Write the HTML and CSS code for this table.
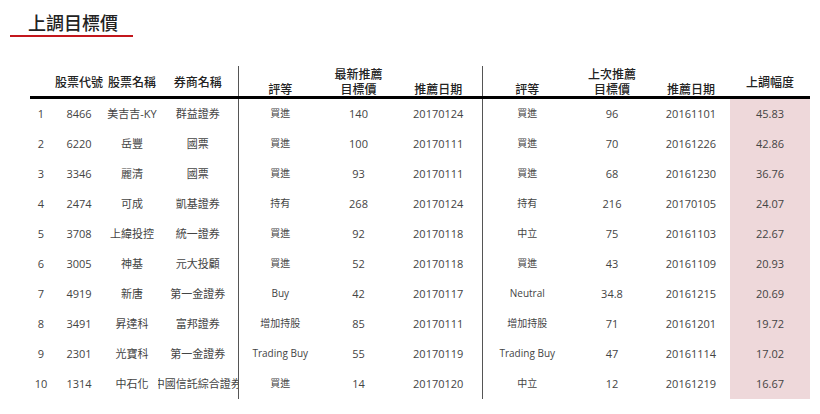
FILE: index.html
```html
<!DOCTYPE html>
<html lang="zh-Hant">
<head>
<meta charset="utf-8">
<title>上調目標價</title>
<link rel="stylesheet" href="styles.css">
</head>
<body>
<div class="page">
  <div class="title"><h1>上調目標價</h1></div>
  <table class="grid">
    <colgroup>
      <col class="w-idx"><col class="w-code"><col class="w-name"><col class="w-broker">
      <col class="w-rate"><col class="w-tgt"><col class="w-date">
      <col class="w-rate2"><col class="w-tgt2"><col class="w-date2"><col class="w-pct">
    </colgroup>
    <thead>
      <tr>
        <th class="mid"></th>
        <th class="mid">股票代號</th>
        <th class="mid">股票名稱</th>
        <th class="mid">券商名稱</th>
        <th class="bot sep">評等</th>
        <th class="bot"><span class="ln">最新推薦</span><span class="ln">目標價</span></th>
        <th class="bot">推薦日期</th>
        <th class="bot sep">評等</th>
        <th class="bot"><span class="ln">上次推薦</span><span class="ln">目標價</span></th>
        <th class="bot">推薦日期</th>
        <th class="mid">上調幅度</th>
      </tr>
    </thead>
    <tbody>
      <tr><td>1</td><td>8466</td><td>美吉吉-KY</td><td><div class="clip"><span>群益證券</span></div></td><td class="sep rate">買進</td><td>140</td><td>20170124</td><td class="sep rate">買進</td><td>96</td><td>20161101</td><td class="pct">45.83</td></tr>
      <tr><td>2</td><td>6220</td><td>岳豐</td><td><div class="clip"><span>國票</span></div></td><td class="sep rate">買進</td><td>100</td><td>20170111</td><td class="sep rate">買進</td><td>70</td><td>20161226</td><td class="pct">42.86</td></tr>
      <tr><td>3</td><td>3346</td><td>麗清</td><td><div class="clip"><span>國票</span></div></td><td class="sep rate">買進</td><td>93</td><td>20170111</td><td class="sep rate">買進</td><td>68</td><td>20161230</td><td class="pct">36.76</td></tr>
      <tr><td>4</td><td>2474</td><td>可成</td><td><div class="clip"><span>凱基證券</span></div></td><td class="sep rate">持有</td><td>268</td><td>20170124</td><td class="sep rate">持有</td><td>216</td><td>20170105</td><td class="pct">24.07</td></tr>
      <tr><td>5</td><td>3708</td><td>上緯投控</td><td><div class="clip"><span>統一證券</span></div></td><td class="sep rate">買進</td><td>92</td><td>20170118</td><td class="sep rate">中立</td><td>75</td><td>20161103</td><td class="pct">22.67</td></tr>
      <tr><td>6</td><td>3005</td><td>神基</td><td><div class="clip"><span>元大投顧</span></div></td><td class="sep rate">買進</td><td>52</td><td>20170118</td><td class="sep rate">買進</td><td>43</td><td>20161109</td><td class="pct">20.93</td></tr>
      <tr><td>7</td><td>4919</td><td>新唐</td><td><div class="clip"><span>第一金證券</span></div></td><td class="sep rate en">Buy</td><td>42</td><td>20170117</td><td class="sep rate en">Neutral</td><td>34.8</td><td>20161215</td><td class="pct">20.69</td></tr>
      <tr><td>8</td><td>3491</td><td>昇達科</td><td><div class="clip"><span>富邦證券</span></div></td><td class="sep rate">增加持股</td><td>85</td><td>20170111</td><td class="sep rate">增加持股</td><td>71</td><td>20161201</td><td class="pct">19.72</td></tr>
      <tr><td>9</td><td>2301</td><td>光寶科</td><td><div class="clip"><span>第一金證券</span></div></td><td class="sep rate en">Trading Buy</td><td>55</td><td>20170119</td><td class="sep rate en">Trading Buy</td><td>47</td><td>20161114</td><td class="pct">17.02</td></tr>
      <tr><td>10</td><td>1314</td><td>中石化</td><td><div class="clip"><span>中國信託綜合證券</span></div></td><td class="sep rate">買進</td><td>14</td><td>20170120</td><td class="sep rate">中立</td><td>12</td><td>20161219</td><td class="pct">16.67</td></tr>
    </tbody>
  </table>
</div>
</body>
</html>
```

FILE: styles.css
```css
html, body {
  margin: 0;
  padding: 0;
  background: #ffffff;
}

body {
  font-family: "Open Sans", "Noto Sans CJK TC", sans-serif;
  color: #444444;
}

.page {
  width: 820px;
  height: 414px;
  overflow: hidden;
}

.title {
  margin-left: 10px;
  width: 123px;
  padding: 10px 0 0 18px;
  box-sizing: border-box;
  border-bottom: 2px solid #c3161c;
}

.title h1 {
  margin: 0;
  font-family: "Noto Sans CJK TC", sans-serif;
  font-size: 18px;
  line-height: 25px;
  font-weight: 500;
  color: #222222;
}

.grid {
  margin: 29px 0 0 30px;
  width: 780px;
  table-layout: fixed;
  border-collapse: collapse;
  border-spacing: 0;
}

.w-idx { width: 22px; }
.w-code { width: 54px; }
.w-name { width: 52px; }
.w-broker { width: 80px; }
.w-rate { width: 84px; }
.w-tgt { width: 73px; }
.w-date { width: 87px; }
.w-rate2 { width: 90px; }
.w-tgt2 { width: 80px; }
.w-date2 { width: 78px; }
.w-pct { width: 80px; }

.grid th {
  height: 29px;
  padding: 0;
  font-family: "Noto Sans CJK TC", sans-serif;
  font-size: 12px;
  line-height: 15px;
  font-weight: 500;
  color: #222222;
  text-align: center;
  border-bottom: 3px solid #000000;
  white-space: nowrap;
}

.grid th .ln {
  display: block;
  height: 15px;
  line-height: 15px;
  overflow: visible;
}

.grid th.mid { vertical-align: middle; }
.grid th.bot { vertical-align: bottom; }

.grid td {
  height: 28px;
  padding: 0 0 2px 0;
  font-size: 11px;
  line-height: 15px;
  text-align: center;
  vertical-align: middle;
  white-space: nowrap;
  overflow: hidden;
}

.grid .sep {
  border-left: 1px solid #555555;
}

.grid td.rate {
  font-size: 10px;
}

.grid td.pct {
  background: #eed8da;
}

.clip {
  display: flex;
  justify-content: center;
  overflow: hidden;
  white-space: nowrap;
}

.clip span {
  flex: none;
}
```
